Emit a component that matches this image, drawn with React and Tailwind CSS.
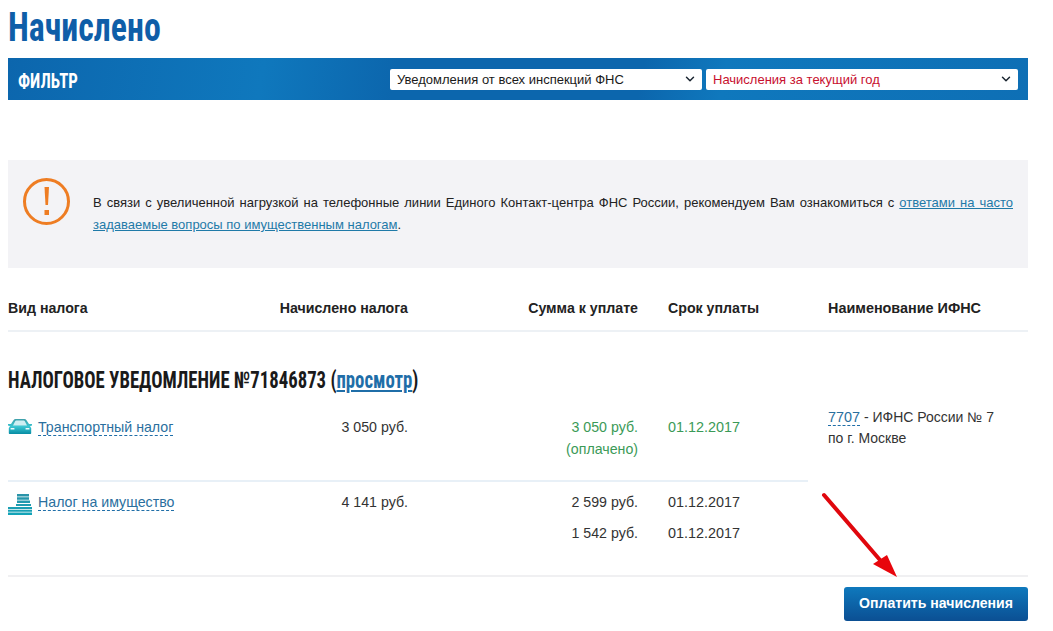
import { ChevronDown } from 'lucide-react'

const sans = 'font-["Liberation_Sans",Arial,sans-serif]'
const narrow = 'font-["Liberation_Sans_Narrow","Roboto_Condensed","Liberation_Sans",sans-serif]'

function Select({ label, className = '' }) {
  return (
    <div className={`flex h-[21px] w-[312px] items-center justify-between rounded-[2px] bg-white pl-[7px] pr-[5px] text-[13px] ${className}`}>
      <span className="pt-px">{label}</span>
      <ChevronDown size={14} strokeWidth={2.5} className="text-[#1a2530]" />
    </div>
  )
}

function CarIcon() {
  return (
    <svg width="24" height="15" viewBox="0 0 24 15">
      <defs>
        <linearGradient id="car" x1="0" y1="0" x2="0" y2="1">
          <stop offset="0" stopColor="#3f9fa9" />
          <stop offset="0.5" stopColor="#3cc6d2" />
          <stop offset="1" stopColor="#078ca3" />
        </linearGradient>
      </defs>
      <path d="M0 5h3L5.500 1.200C6 .4 6.800 0 7.600 0h8.800c.8 0 1.600.4 2.100 1.200L21 5h3v1.500l-2 .8 1.200 1.700V14c0 .6-.4 1-1 1H1.800c-.6 0-1-.4-1-1V9L2 7.300 0 6.500z" fill="url(#car)" />
      <path d="M5 6.500l2.300-4.500c.2-.4.600-.6 1-.6h7.400c.4 0 .8.2 1 .6L19 6.500z" fill="#cfeef2" />
      <rect x="2.500" y="9" width="4" height="1.500" rx=".5" fill="#ecfbfc" />
      <rect x="17.500" y="9" width="4" height="1.500" rx=".5" fill="#ecfbfc" />
    </svg>
  )
}

function BuildingIcon() {
  return (
    <svg width="24" height="21" viewBox="0 0 24 21">
      <defs>
        <linearGradient id="building" x1="0" y1="0" x2="0" y2="1">
          <stop offset="0" stopColor="#2b93a8" />
          <stop offset="1" stopColor="#12a4b8" />
        </linearGradient>
      </defs>
      <path d="M9 0h12v2.500H9zM9 3.300h12v2.500H9zM9 6.600h13v2.500H9zM8 9.900h15v2.200H8zM0 13h24v2H0zM0 15.800h24v2H0zM0 18.600h24V21H0z" fill="url(#building)" />
    </svg>
  )
}

function WarningIcon() {
  return (
    <svg width="47" height="47" viewBox="0 0 47 47" className="shrink-0">
      <circle cx="23.500" cy="23.500" r="22" fill="none" stroke="#ee7d23" strokeWidth="3" />
      <path d="M21.500 9h4.500l-1 18h-2.500z" fill="#ee7d23" />
      <rect x="21.500" y="32" width="4.500" height="5" fill="#ee7d23" />
    </svg>
  )
}

function TaxName({ icon, children }) {
  return (
    <div className="flex w-[270px] items-start">
      <div className="mt-[3px] flex w-[30px] shrink-0 justify-start">{icon}</div>
      <span className="mt-[3px] border-b border-dashed border-[#1f6ea8] text-[14.200px] leading-[16px] text-[#2a6f9e]">{children}</span>
    </div>
  )
}

export default function App() {
  return (
    <div className={`relative h-[631px] w-[1053px] overflow-hidden bg-white pl-2 text-[14.200px] text-[#333] ${sans}`}>
      <div className="w-[1020px]">
        <h1 className={`h-[58px] origin-left scale-x-[0.826] pt-[5px] text-[41px] font-bold leading-[44px] text-[#0f5ea8] ${narrow}`}>
          Начислено
        </h1>

        <div className="flex h-[42px] items-center justify-between bg-[linear-gradient(100deg,#0c66ad_0%,#0f78bd_25%,#0c66ad_38%,#0c66ad_62%,#0f78bd_70%,#0e6fb5_100%)] px-[10px]">
          <span className={`mt-[5px] origin-left scale-x-[0.8] text-[21px] font-bold text-white ${narrow}`}>ФИЛЬТР</span>
          <div className="flex gap-1 text-[#1a1a1a]">
            <Select label="Уведомления от всех инспекций ФНС" />
            <Select label="Начисления за текущий год" className="text-[#c8102e]" />
          </div>
        </div>

        <div className="mt-[60px] flex h-[108px] items-start bg-[#f3f3f6] px-[15px] pt-[18px]">
          <WarningIcon />
          <p className="ml-[23px] pt-[14px] text-justify text-[13px] leading-[22px] text-[#222]">
            В связи с увеличенной нагрузкой на телефонные линии Единого Контакт-центра ФНС России, рекомендуем Вам ознакомиться с{' '}
            <span className="text-[#1f7aa8] underline">ответами на часто</span>{' '}
            <span className="text-[#1f7aa8] underline">задаваемые вопросы по имущественным налогам</span>.
          </p>
        </div>

        <div className="mt-[30px] grid h-[34px] grid-cols-[270px_130px_230px_190px_200px] whitespace-nowrap border-b-2 border-[#edf1f5] font-bold text-[#222]">
          <span>Вид налога</span>
          <span className="text-right">Начислено налога</span>
          <span className="text-right">Сумма к уплате</span>
          <span className="pl-[30px]">Срок уплаты</span>
          <span className="text-[14.400px]">Наименование ИФНС</span>
        </div>

        <h2 className={`mt-[35px] h-[28px] origin-left scale-x-[0.815] whitespace-nowrap text-[23px] font-bold leading-[28px] text-[#1a1a1a] ${narrow}`}>
          НАЛОГОВОЕ УВЕДОМЛЕНИЕ №71846873 (<span className="text-[#1f6ea8] underline">просмотр</span>)
        </h2>

        <div className="flex">
          <div className="w-[800px]">
            <div className="flex h-[87px] items-start border-b-2 border-[#e8f0f7] pt-[21px] leading-[22px]">
              <TaxName icon={<CarIcon />}>Транспортный налог</TaxName>
              <span className="w-[130px] text-right">3 050 руб.</span>
              <div className="w-[230px] text-right text-[#3b9a57]">
                <div>3 050 руб.</div>
                <div>(оплачено)</div>
              </div>
              <span className="pl-[30px] text-[14.400px] text-[#3b9a57]">01.12.2017</span>
            </div>
            <div className="flex h-[95px] items-start border-b-2 border-[#f0f0f2] pt-[9px] leading-[22px]">
              <TaxName icon={<BuildingIcon />}>Налог на имущество</TaxName>
              <span className="w-[130px] text-right">4 141 руб.</span>
              <div className="w-[230px] text-right">
                <div className="h-[31px]">2 599 руб.</div>
                <div>1 542 руб.</div>
              </div>
              <div className="pl-[30px] text-[14.400px]">
                <div className="h-[31px]">01.12.2017</div>
                <div>01.12.2017</div>
              </div>
            </div>
          </div>
          <div className="w-[220px] border-b-2 border-[#f0f0f2] pl-5 pt-[12px] text-[14px] leading-[21px]">
            <span className="border-b border-dashed border-[#1f6ea8] text-[14.400px] leading-[16px] text-[#2a6f9e]">7707</span> - ИФНС России № 7
            <br />
            по г. Москве
          </div>
        </div>

        <div className="mt-[10px] flex justify-end">
          <button className="h-[34px] w-[184px] rounded-[3px] bg-gradient-to-b from-[#0f79bd] to-[#0b4f93] text-[14.100px] font-bold text-white">
            Оплатить начисления
          </button>
        </div>
      </div>

      <svg className="absolute left-[820px] top-[490px]" width="84" height="96" viewBox="0 0 84 96">
        <path d="M4 5 L60 70" stroke="#e0070d" strokeWidth="4" strokeLinecap="round" />
        <path d="M77 87 L53 74 L67 65 Z" fill="#e8060c" />
      </svg>
    </div>
  )
}
